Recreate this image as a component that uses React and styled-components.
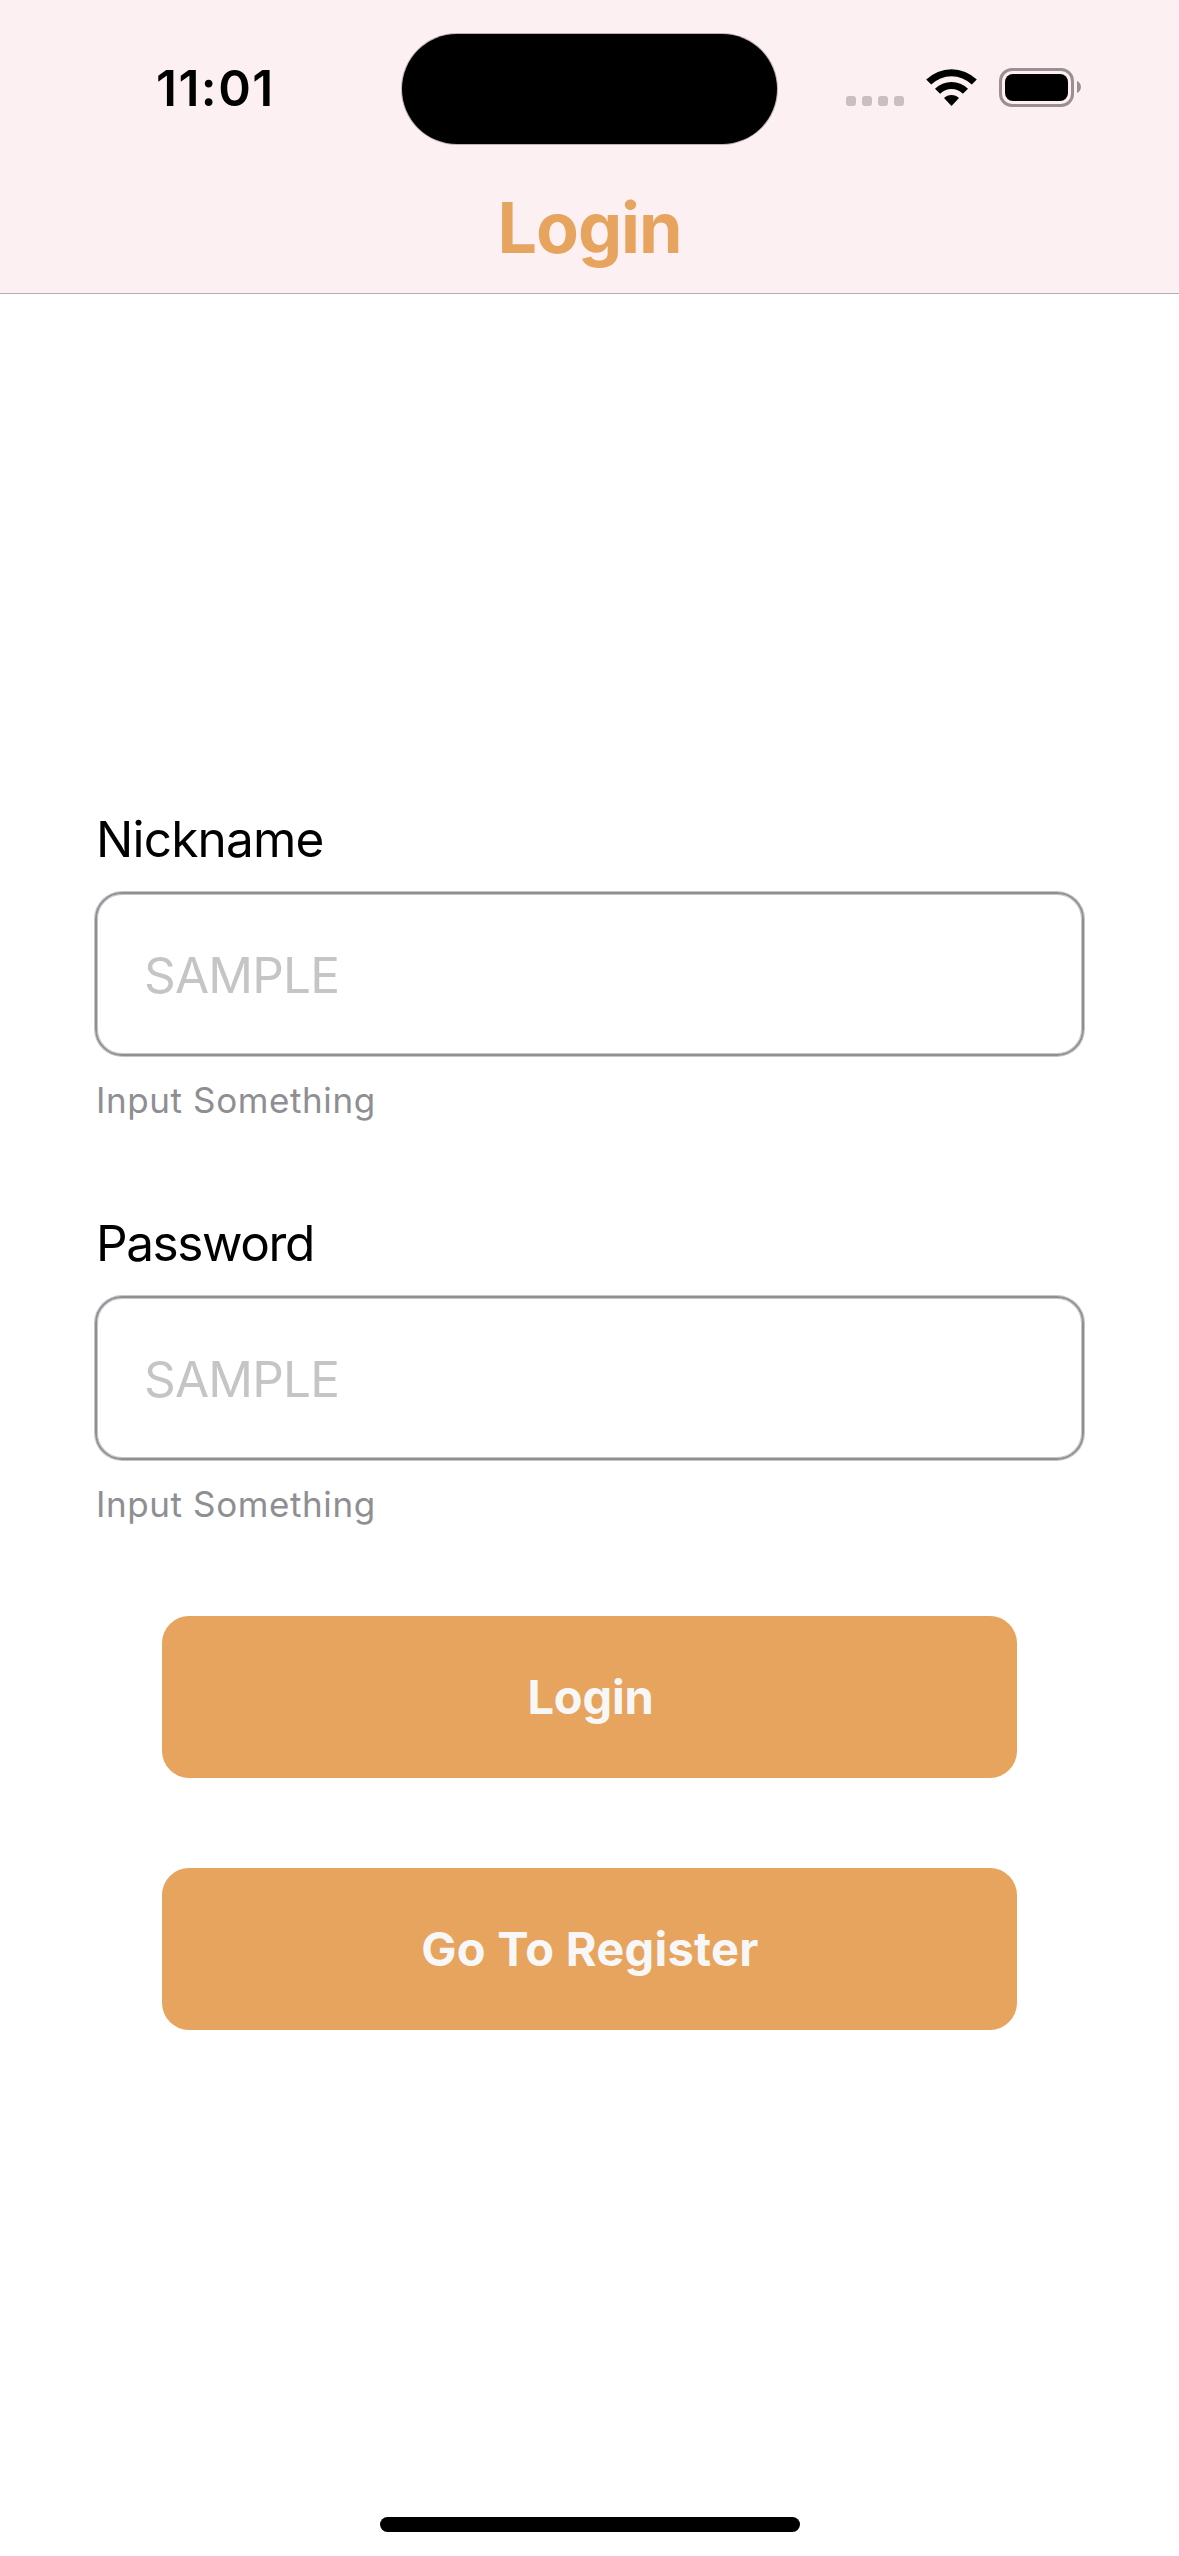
import React from "react";
import styled, { createGlobalStyle } from "styled-components";

const GlobalStyle = createGlobalStyle`
  html, body { margin: 0; padding: 0; background: #ffffff; }
  *, *::before, *::after { box-sizing: border-box; }
  body { font-family: Inter, "Liberation Sans", sans-serif; }
`;

const Screen = styled.main`
  width: 1179px;
  height: 2556px;
  display: flex;
  flex-direction: column;
  background: #ffffff;
  overflow: hidden;
`;

const Header = styled.header`
  height: 294px;
  display: flex;
  flex-direction: column;
  background: #fcf0f2;
  border-bottom: 1px solid #b5adb0;
`;

const StatusBar = styled.div`
  height: 145px;
  display: grid;
  grid-template-columns: 402px 375px 402px;
  align-items: start;
`;

const Clock = styled.time`
  margin-top: 58px;
  padding-left: 156px;
  font-size: 49.5px;
  line-height: 60px;
  font-weight: 600;
  letter-spacing: 1.5px;
  white-space: nowrap;
  color: #000000;
`;

const Island = styled.div`
  height: 110px;
  margin-top: 34px;
  border-radius: 55px;
  background: #000000;
  box-shadow: 0 0 0 1px rgba(0, 0, 0, 0.25);
`;

const StatusIcons = styled.svg`
  display: block;
  width: 240px;
  height: 44px;
  margin: 65px 0 0 66px;
`;

const Title = styled.h1`
  margin: 40px 0 0;
  font-size: 70px;
  line-height: 85px;
  font-weight: 700;
  letter-spacing: -1.1px;
  text-align: center;
  color: #e6a45e;
`;

const Form = styled.form`
  display: flex;
  flex-direction: column;
  padding: 515px 95px 0;
`;

const Fields = styled.div`
  display: flex;
  flex-direction: column;
  gap: 92px;
`;

const Field = styled.label`
  display: flex;
  flex-direction: column;
  gap: 23px;
`;

const Caption = styled.span`
  padding-left: 1px;
  font-size: 49.5px;
  line-height: 60px;
  letter-spacing: ${(p) => p.$tracking};
  color: #000000;
`;

const Input = styled.input`
  width: 100%;
  height: 164px;
  padding: 1px 47px 0;
  border: 2px solid #8e8e93;
  border-radius: 27px;
  background: transparent;
  box-shadow: 0 0 0 1px rgba(142, 142, 147, 0.5), inset 0 0 0 1px rgba(142, 142, 147, 0.5);
  outline: none;
  font-family: inherit;
  font-size: 49.5px;
  letter-spacing: -0.8px;
  color: #000000;
  &::placeholder { color: #c5c5c7; opacity: 1; }
`;

const Hint = styled.span`
  padding-left: 1px;
  font-size: 35px;
  line-height: 42px;
  letter-spacing: 0.6px;
  color: #8e8e93;
`;

const Actions = styled.div`
  display: flex;
  flex-direction: column;
  gap: 90px;
  padding: 91px 67px 0;
`;

const Button = styled.button`
  height: 162px;
  padding: 0 0 0 ${(p) => p.$nudge || "0px"};
  border: 0;
  border-radius: 27px;
  background: #e6a45e;
  font-family: inherit;
  font-size: 47px;
  line-height: 58px;
  font-weight: 700;
  letter-spacing: ${(p) => p.$tracking};
  color: #f7f7f7;
`;

const HomeBar = styled.div`
  width: 420px;
  height: 15px;
  margin: auto auto 24px;
  border-radius: 8px;
  background: #000000;
`;

const fields = [
  { name: "nickname", label: "Nickname", tracking: "-0.8px" },
  { name: "password", label: "Password", tracking: "-1.4px" },
];

function Indicators() {
  return (
    <StatusIcons viewBox="843 65 240 44" aria-hidden="true">
      {[846, 862, 878, 894].map((x) => (
        <rect key={x} x={x} y="96" width="10" height="10" rx="3" fill="#cac0c2" />
      ))}
      <path d="M926.2 79.6A36 36 0 0 1 976.8 79.6L971.8 84.6A29 29 0 0 0 931.2 84.6Z" />
      <path d="M935 88.7A23.4 23.4 0 0 1 968 88.7L962.9 93.8A16.2 16.2 0 0 0 940.1 93.8Z" />
      <path d="M944 98A10.6 10.6 0 0 1 959 98L951.5 106Z" />
      <rect x="1000.5" y="69.5" width="72" height="36" rx="11.5" fill="none" stroke="#9a9093" strokeWidth="3" />
      <rect x="1005" y="74" width="63" height="27" rx="8" />
      <path d="M1077 81C1082.3 83 1082.3 91 1077 93Z" fill="#9a9093" />
    </StatusIcons>
  );
}

export default function App() {
  return (
    <>
      <GlobalStyle />
      <Screen>
        <Header>
          <StatusBar>
            <Clock>11:01</Clock>
            <Island />
            <Indicators />
          </StatusBar>
          <Title>Login</Title>
        </Header>
        <Form onSubmit={(e) => e.preventDefault()}>
          <Fields>
            {fields.map((f) => (
              <Field key={f.name}>
                <Caption $tracking={f.tracking}>{f.label}</Caption>
                <Input name={f.name} placeholder="SAMPLE" />
                <Hint>Input Something</Hint>
              </Field>
            ))}
          </Fields>
          <Actions>
            <Button type="submit" $tracking="-0.2px" $nudge="2px">Login</Button>
            <Button type="button" $tracking="0.25px" $nudge="1px">Go To Register</Button>
          </Actions>
        </Form>
        <HomeBar />
      </Screen>
    </>
  );
}
